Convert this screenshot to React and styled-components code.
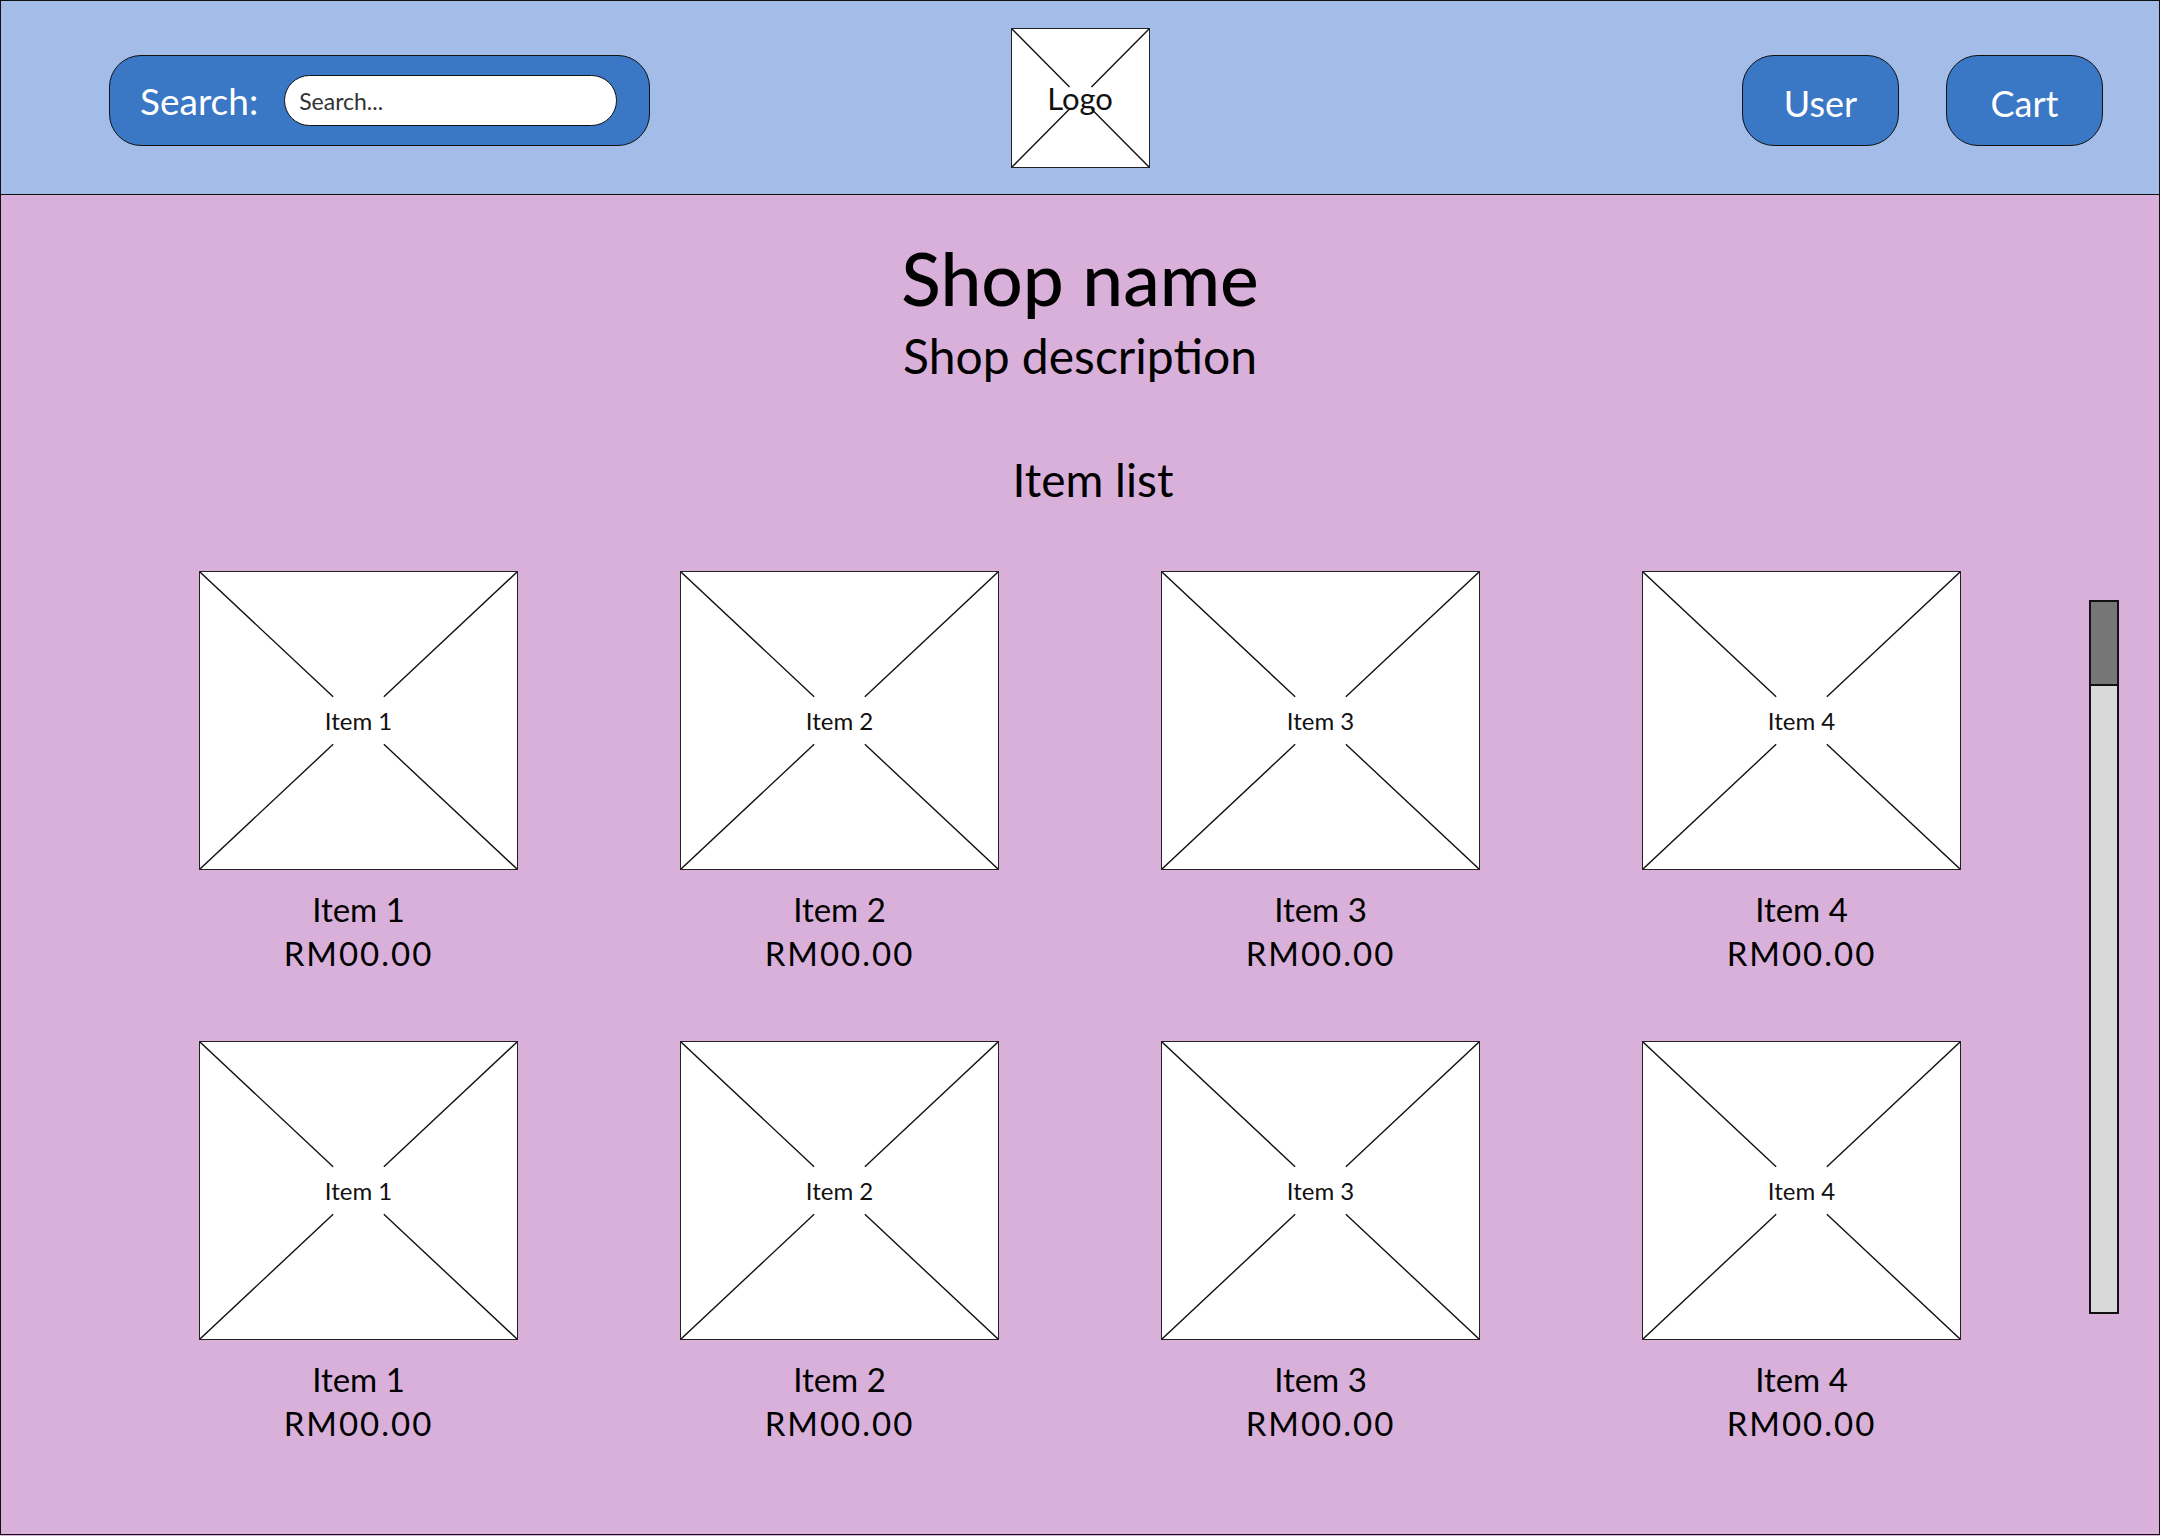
import React from "react";
import styled, { createGlobalStyle } from "styled-components";

const Global = createGlobalStyle`
  html, body { margin: 0; padding: 0; background: #d9b0da; }
  body { font-family: "Lato", "Noto Sans", sans-serif; color: #000; }
  * { box-sizing: border-box; }
`;

const Frame = styled.div`
  width: 2160px;
  height: 1535px;
  border: 1.5px solid #111;
  display: flex;
  flex-direction: column;
  position: relative;
  overflow: hidden;
  background: #d9b0da;
`;

const Header = styled.header`
  height: 194px;
  flex: none;
  background: #a4bce8;
  border-bottom: 1.5px solid #111;
  display: grid;
  grid-template-columns: 1fr auto 1fr;
  align-items: center;
  padding: 0 56px;
`;

const SearchPill = styled.div`
  justify-self: start;
  margin-left: 52px;
  width: 541px;
  height: 91px;
  border-radius: 32px;
  background: #3a77c5;
  border: 1.5px solid #111;
  display: flex;
  align-items: center;
  gap: 26px;
  padding: 0 32px 0 30px;
  margin-top: 6px;
`;

const SearchLabel = styled.span`
  color: #fff;
  font-size: 37px;
  white-space: nowrap;
`;

const SearchInput = styled.input`
  flex: 1;
  min-width: 0;
  height: 51px;
  border-radius: 26px;
  border: 1.5px solid #111;
  background: #fff;
  padding: 0 14px;
  font-family: inherit;
  font-size: 23px;
  color: #222;
  outline: none;
  &::placeholder { color: #333; }
`;

const Placeholder = styled.div`
  position: relative;
  width: ${(p) => p.$w}px;
  height: ${(p) => p.$h}px;
  background: #fff;
  border: 1.5px solid #222;
  display: flex;
  align-items: center;
  justify-content: center;
`;

const Cross = styled.svg`
  position: absolute;
  inset: 0;
  width: 100%;
  height: 100%;
`;

const PlaceLabel = styled.span`
  position: relative;
  font-size: ${(p) => p.$size}px;
  color: #111;
`;

const Actions = styled.div`
  justify-self: end;
  display: flex;
  gap: 47px;
  margin-top: 6px;
`;

const NavButton = styled.button`
  width: 157px;
  height: 91px;
  border-radius: 32px;
  background: #3a77c5;
  border: 1.5px solid #111;
  color: #fff;
  font-family: inherit;
  font-size: 36px;
  padding: 0;
  padding-top: 4px;
`;

const Main = styled.main`
  flex: 1;
  display: flex;
  flex-direction: column;
  align-items: center;
  padding-top: 38px;
`;

const ShopName = styled.h1`
  margin: 0;
  font-size: 73px;
  font-weight: 500;
  line-height: 90px;
`;

const ShopDesc = styled.p`
  margin: 3px 0 0;
  font-size: 48px;
  line-height: 60px;
`;

const SectionTitle = styled.h2`
  margin: 64px 0 0 26px;
  font-size: 46px;
  font-weight: 400;
  line-height: 60px;
`;

const Grid = styled.div`
  margin-top: 61px;
  display: grid;
  grid-template-columns: repeat(4, 319px);
  column-gap: 162px;
  row-gap: 66px;
`;

const Card = styled.div`
  display: flex;
  flex-direction: column;
  align-items: center;
`;

const CardName = styled.div`
  margin-top: 17px;
  font-size: 33px;
  line-height: 44px;
`;

const CardPrice = styled.div`
  font-size: 33px;
  line-height: 44px;
  letter-spacing: 2px;
`;

const Scrollbar = styled.div`
  position: absolute;
  left: 2088px;
  top: 599px;
  width: 30px;
  height: 714px;
  background: #d9d9d9;
  border: 2px solid #111;
`;

const Thumb = styled.div`
  height: 84px;
  background: #767676;
  border-bottom: 2px solid #111;
`;

function XBox({ w, h, label, size }) {
  const g = 0.42;
  const s = 1 - g;
  return (
    <Placeholder $w={w} $h={h}>
      <Cross viewBox="0 0 100 100" preserveAspectRatio="none">
        {[
          [0, 0, g * 100, g * 100],
          [100, 0, s * 100, g * 100],
          [0, 100, g * 100, s * 100],
          [100, 100, s * 100, s * 100],
        ].map(([x1, y1, x2, y2], i) => (
          <line key={i} x1={x1} y1={y1} x2={x2} y2={y2} stroke="#111" strokeWidth="1.4" vectorEffect="non-scaling-stroke" />
        ))}
      </Cross>
      <PlaceLabel $size={size}>{label}</PlaceLabel>
    </Placeholder>
  );
}

const items = [1, 2, 3, 4, 1, 2, 3, 4];

export default function App() {
  return (
    <>
      <Global />
      <Frame>
        <Header>
          <SearchPill>
            <SearchLabel>Search:</SearchLabel>
            <SearchInput placeholder="Search..." />
          </SearchPill>
          <XBox w={139} h={140} label="Logo" size={31} />
          <Actions>
            <NavButton>User</NavButton>
            <NavButton>Cart</NavButton>
          </Actions>
        </Header>
        <Main>
          <ShopName>Shop name</ShopName>
          <ShopDesc>Shop description</ShopDesc>
          <SectionTitle>Item list</SectionTitle>
          <Grid>
            {items.map((n, i) => (
              <Card key={i}>
                <XBox w={319} h={299} label={`Item ${n}`} size={24} />
                <CardName>Item {n}</CardName>
                <CardPrice>RM00.00</CardPrice>
              </Card>
            ))}
          </Grid>
        </Main>
        <Scrollbar>
          <Thumb />
        </Scrollbar>
      </Frame>
    </>
  );
}
